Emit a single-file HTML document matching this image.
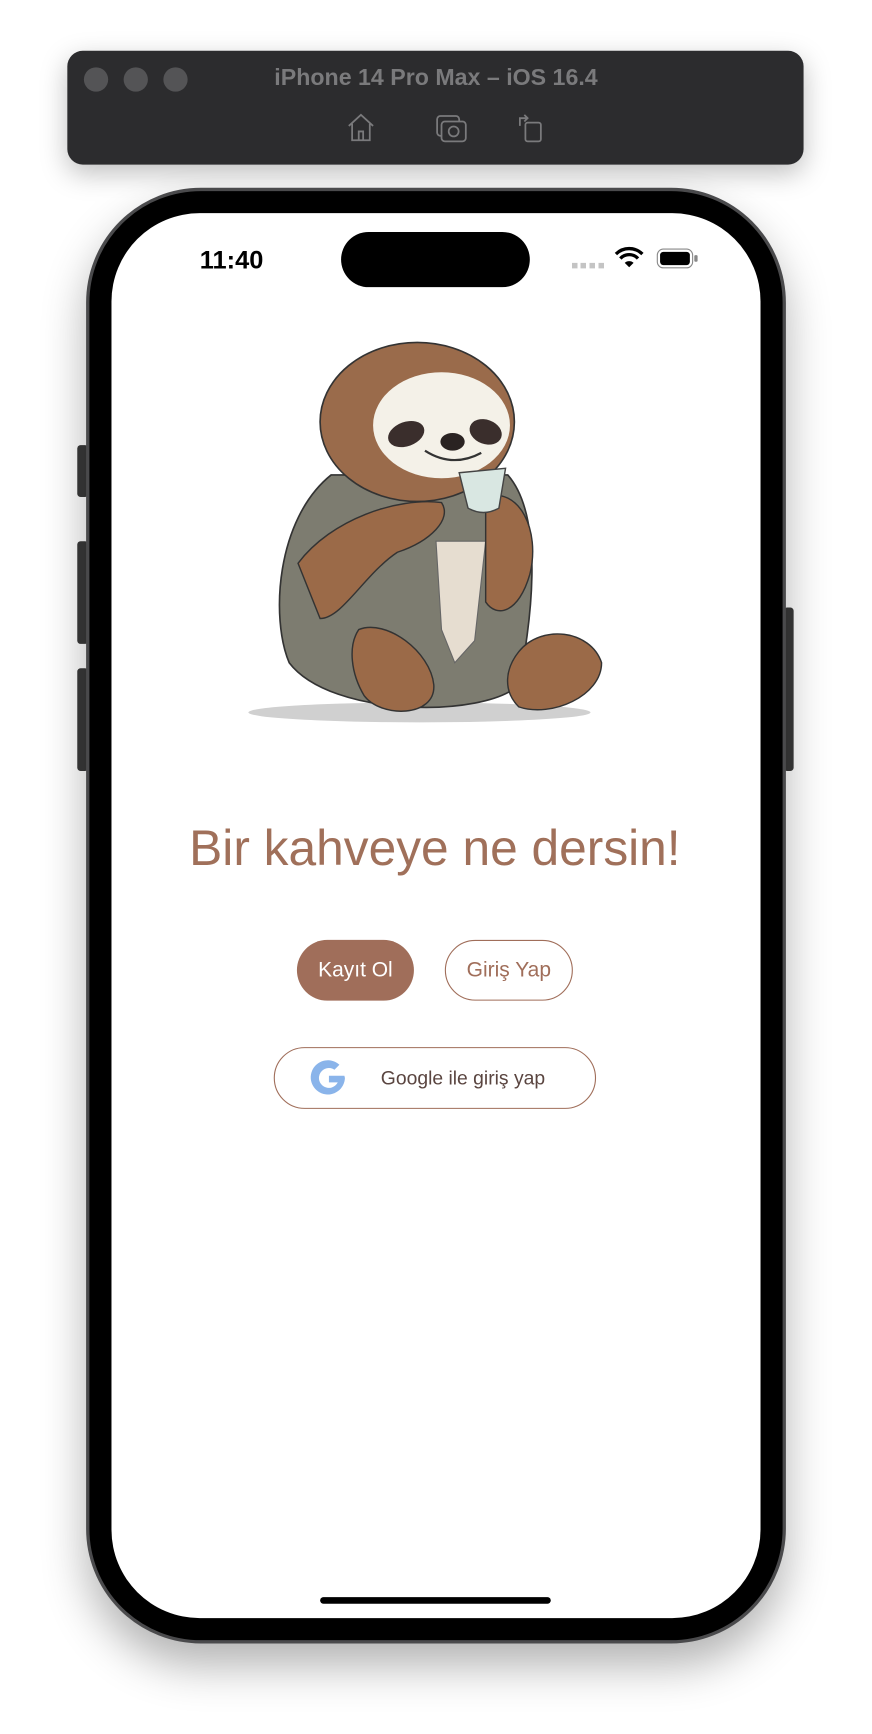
<!DOCTYPE html>
<html><head><meta charset="utf-8"><style>
html,body{margin:0;padding:0;background:#fff;width:872px;height:1734px;overflow:hidden}
#w{position:absolute;left:0;top:0;width:790px;height:1570px;transform:scale(1.1038,1.1045);transform-origin:0 0;font-family:"Liberation Sans",sans-serif}
.a{position:absolute}
</style></head><body><div id="w">
<div class="a" style="left:61px;top:46px;width:667px;height:103px;background:#2c2c2e;border-radius:14px;box-shadow:0 8px 24px rgba(0,0,0,.25)"></div>
<div class="a" style="left:76px;top:61px;width:22px;height:22px;border-radius:50%;background:#545456"></div>
<div class="a" style="left:112px;top:61px;width:22px;height:22px;border-radius:50%;background:#545456"></div>
<div class="a" style="left:148px;top:61px;width:22px;height:22px;border-radius:50%;background:#545456"></div>
<div class="a" style="left:200px;top:59px;width:390px;text-align:center;color:#7a7a7c;font-weight:bold;font-size:21px">iPhone 14 Pro Max – iOS 16.4</div>
<svg class="a" style="left:312px;top:102px" width="190" height="28" fill="none" stroke="#7a7a7c" stroke-width="1.6">
<path d="M4 12 L15 2 L26 12 M7 10 V25 H23 V10 M13 25 V17 H17 V25"/>
<rect x="84" y="3" width="20" height="18" rx="3"/><rect x="88" y="8" width="22" height="18" rx="3" fill="#2c2c2e"/><circle cx="99" cy="17" r="4.5"/>
<rect x="164" y="9" width="14" height="17" rx="2"/><path d="M159 12 V5 H166 M163 2 L166 5 L163 8"/>
</svg>
<div class="a" style="left:70px;top:403px;width:10px;height:47px;background:#3a3a3a;border-radius:3px"></div>
<div class="a" style="left:70px;top:490px;width:10px;height:93px;background:#3a3a3a;border-radius:3px"></div>
<div class="a" style="left:70px;top:605px;width:10px;height:93px;background:#3a3a3a;border-radius:3px"></div>
<div class="a" style="left:710px;top:550px;width:9px;height:148px;background:#3a3a3a;border-radius:3px"></div>
<div class="a" style="left:78px;top:170px;width:634px;height:1318px;background:#000;border-radius:104px;box-shadow:0 20px 40px rgba(0,0,0,.3);border:3px solid #4a4a4c;box-sizing:border-box"></div>
<div class="a" style="left:101px;top:193px;width:588px;height:1272px;background:#fff;border-radius:80px"></div>
<div class="a" style="left:309px;top:210px;width:171px;height:50px;background:#000;border-radius:25px"></div>
<div class="a" style="left:181px;top:222px;font-size:23px;font-weight:bold;color:#000">11:40</div>
<div class="a" style="left:518px;top:238px;width:30px;height:5px;background:repeating-linear-gradient(90deg,#c4c4c4 0 5px,transparent 5px 8px)"></div>
<svg class="a" style="left:556px;top:222px" width="28" height="22"><path d="M14 20 L10 16 A6 6 0 0 1 18 16 Z" fill="#000"/><path d="M6 12 A11 11 0 0 1 22 12" stroke="#000" stroke-width="3" fill="none"/><path d="M2 8 A17 17 0 0 1 26 8" stroke="#000" stroke-width="3" fill="none"/></svg>
<div class="a" style="left:595px;top:225px;width:33px;height:18px;border:1.5px solid #888;border-radius:6px;box-sizing:border-box;padding:2px"><div style="width:100%;height:100%;background:#000;border-radius:3px"></div></div>
<div class="a" style="left:629px;top:231px;width:3px;height:6px;background:#888;border-radius:1px"></div>
<svg class="a" style="left:215px;top:305px" width="340" height="360" viewBox="215 305 340 360">
<ellipse cx="380" cy="645" rx="155" ry="9" fill="#d0d0d0"/>
<path d="M262 600 C245 560 250 470 300 430 L460 430 C495 470 480 570 470 620 C440 650 300 650 262 600Z" fill="#7d7c70" stroke="#333" stroke-width="1.5"/>
<path d="M395 490 L440 490 L430 580 L412 600 L400 570Z" fill="#e6ddd0" stroke="#666"/>
<ellipse cx="378" cy="382" rx="88" ry="72" fill="#9a6b4b" stroke="#333" stroke-width="1.5"/>
<ellipse cx="400" cy="385" rx="62" ry="48" fill="#f4f1e8"/>
<ellipse cx="368" cy="393" rx="17" ry="11" fill="#3a2e2c" transform="rotate(-20 368 393)"/>
<ellipse cx="440" cy="391" rx="15" ry="11" fill="#3a2e2c" transform="rotate(20 440 391)"/>
<ellipse cx="410" cy="400" rx="11" ry="8" fill="#2a2322"/>
<path d="M385 408 Q410 424 436 410" stroke="#333" stroke-width="2" fill="none"/>
<path d="M270 510 C300 470 360 450 400 455 C410 470 390 490 360 500 C330 520 310 560 290 560Z" fill="#9b6a48" stroke="#333" stroke-width="1.3"/>
<path d="M440 450 C470 440 490 480 480 520 C470 555 450 560 440 545 Z" fill="#9b6a48" stroke="#333" stroke-width="1.3"/>
<path d="M416 428 L458 424 L452 460 Q438 468 424 460Z" fill="#d9e7e2" stroke="#444" stroke-width="1.3"/>
<path d="M325 570 C350 560 390 590 393 620 C395 650 345 650 330 630 C318 610 315 585 325 570Z" fill="#9b6a48" stroke="#333" stroke-width="1.3"/>
<path d="M470 590 C490 565 535 570 545 600 C545 630 500 650 470 640 C455 625 458 605 470 590Z" fill="#9b6a48" stroke="#333" stroke-width="1.3"/>
</svg>
<div class="a" style="left:100px;top:742px;width:588px;text-align:center;font-size:45px;color:#a0705a">Bir kahveye ne dersin!</div>
<div class="a" style="left:269px;top:851px;width:106px;height:55px;border-radius:28px;background:#a06e5a;color:#fff;font-size:19px;line-height:55px;text-align:center">Kayıt Ol</div>
<div class="a" style="left:403px;top:851px;width:116px;height:55px;border-radius:28px;border:1.3px solid #a06e5a;box-sizing:border-box;color:#a06e5a;font-size:19px;line-height:53px;text-align:center">Giriş Yap</div>
<div class="a" style="left:248px;top:948px;width:292px;height:56px;border-radius:28px;border:1.3px solid #a06e5a;box-sizing:border-box"></div>
<svg class="a" style="left:279px;top:958px" width="38" height="36" viewBox="0 0 38 36"><path d="M33 16 H19 V22 H27 A9 9 0 1 1 24 10.5 L28.5 6 A15.5 15.5 0 1 0 33.5 18 Z" fill="#8ab4ea"/></svg>
<div class="a" style="left:345px;top:966px;font-size:17.5px;color:#5a4540">Google ile giriş yap</div>
<div class="a" style="left:290px;top:1446px;width:209px;height:6px;border-radius:3px;background:#000"></div>
</div></body></html>
